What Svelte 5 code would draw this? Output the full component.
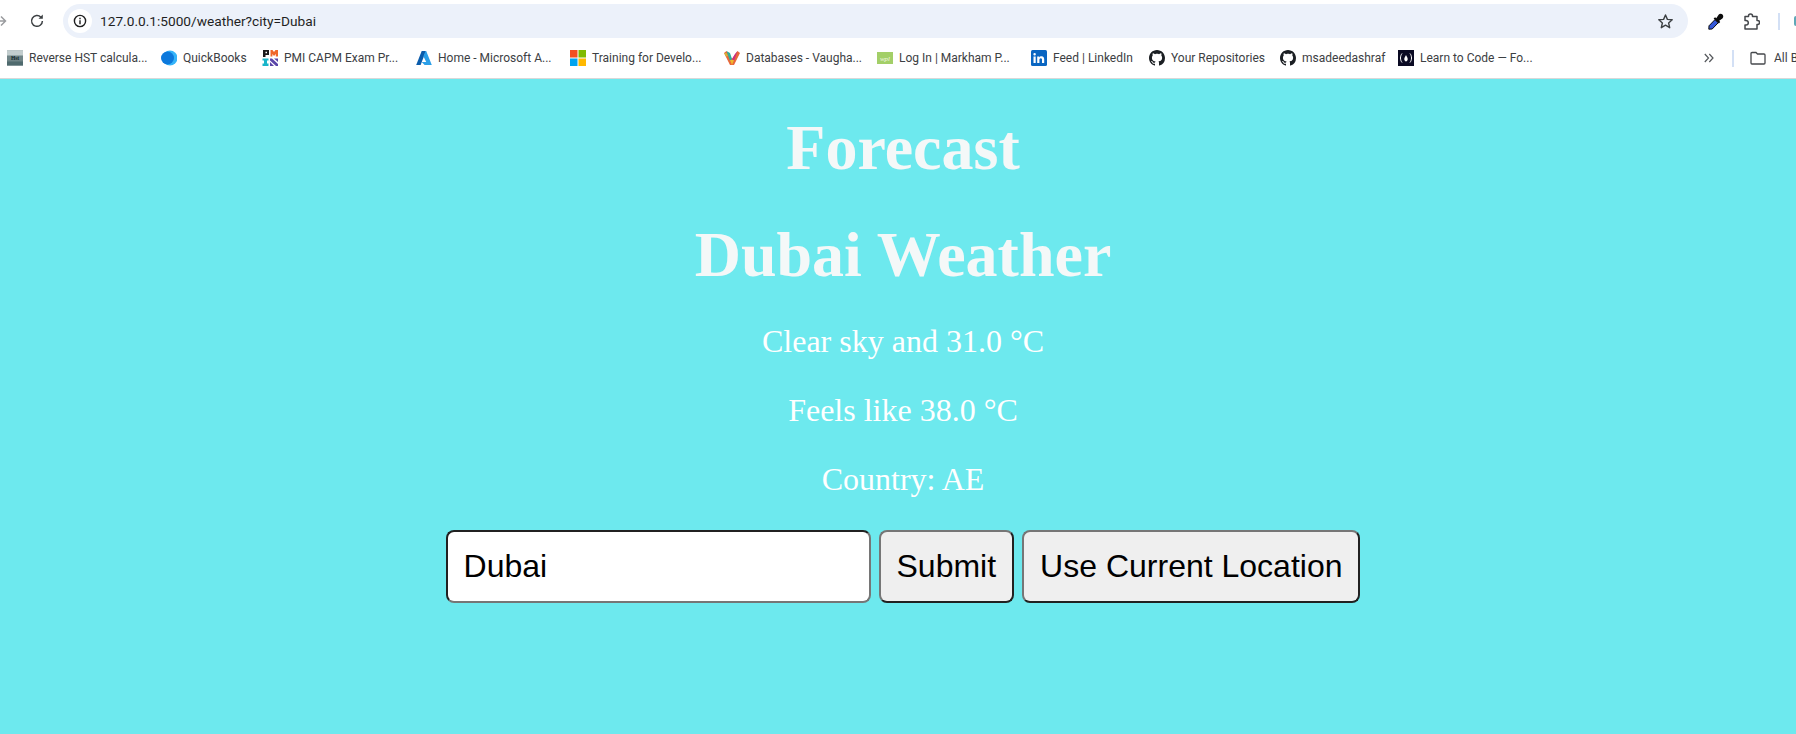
<script>
  const bookmarks = [
    { id: 'hst', label: 'Reverse HST calcula...', w: 154 },
    { id: 'qb', label: 'QuickBooks', w: 101 },
    { id: 'pmi', label: 'PMI CAPM Exam Pr...', w: 154 },
    { id: 'az', label: 'Home - Microsoft A...', w: 154 },
    { id: 'ms', label: 'Training for Develo...', w: 154 },
    { id: 'v', label: 'Databases - Vaugha...', w: 153 },
    { id: 'wpl', label: 'Log In | Markham P...', w: 154 },
    { id: 'in', label: 'Feed | LinkedIn', w: 118 },
    { id: 'gh', label: 'Your Repositories', w: 131 },
    { id: 'gh', label: 'msadeedashraf', w: 118 },
    { id: 'fcc', label: 'Learn to Code — Fo...', w: 136 }
  ];
  const ghPath = 'M8 0C3.58 0 0 3.58 0 8c0 3.54 2.29 6.53 5.47 7.59.4.07.55-.17.55-.38 0-.19-.01-.82-.01-1.49-2.01.37-2.53-.49-2.69-.94-.09-.23-.48-.94-.82-1.13-.28-.15-.68-.52-.01-.53.63-.01 1.08.58 1.23.82.72 1.21 1.87.87 2.33.66.07-.52.28-.87.51-1.07-1.78-.2-3.64-.89-3.64-3.95 0-.87.31-1.59.82-2.15-.08-.2-.36-1.02.08-2.12 0 0 .67-.21 2.2.82.64-.18 1.32-.27 2-.27s1.36.09 2 .27c1.53-1.04 2.2-.82 2.2-.82.44 1.1.16 1.92.08 2.12.51.56.82 1.27.82 2.15 0 3.07-1.87 3.75-3.65 3.95.29.25.54.73.54 1.48 0 1.07-.01 1.93-.01 2.2 0 .21.15.46.55.38A8.01 8.01 0 0 0 16 8c0-4.42-3.58-8-8-8z';
</script>

<div class="page">
  <header class="chrome">
    <div class="toolbar">
      <svg class="back" width="12" height="16" viewBox="0 0 12 16"><path d="M0 8h8M4 3.500 8.500 8 4 12.500" fill="none" stroke="#9a9c9f" stroke-width="1.500"/></svg>
      <svg class="reload" width="16" height="16" viewBox="0 0 16 16"><path d="M13.400 8a5.400 5.400 0 1 1-1.500-3.800" fill="none" stroke="#3c4043" stroke-width="1.500"/><path d="M13.800 1.500v4.300H9.500z" fill="#3c4043"/></svg>
      <div class="omnibox">
        <span class="info">
          <svg width="14" height="14" viewBox="0 0 14 14"><circle cx="7" cy="7" r="5.600" fill="none" stroke="#1f1f1f" stroke-width="1.400"/><path d="M7 6.200v4M7 3.800v1.400" stroke="#1f1f1f" stroke-width="1.400"/></svg>
        </span>
        <span class="url">127.0.0.1:5000/weather?city=Dubai</span>
        <svg class="star" width="17" height="17" viewBox="0 0 17 17"><path d="m8.500 2 1.900 4.400 4.800.4-3.600 3.200 1.100 4.700-4.200-2.500-4.200 2.500 1.100-4.700-3.600-3.200 4.800-.4z" fill="none" stroke="#3c4043" stroke-width="1.400" stroke-linejoin="round"/></svg>
      </div>
      <div class="actions">
        <svg class="dropper" width="16" height="17" viewBox="0 0 16 17"><path d="M.8 16.200 1 12.800 7 6.600l3.200 3.200-6 6.200z" fill="#3558d8" stroke="#0c0c0c" stroke-width="1" stroke-linejoin="round"/><path d="m5.600 5.600 1.500-1.300 1.200 1 2.300-3.600c1-1.300 2.900-1.300 3.900-.2s1.100 2.900-.1 3.900L11.200 7.800l1 1.200-1.400 1.500z" fill="#0c0c0c"/></svg>
        <svg class="puzzle" width="16" height="17" viewBox="0 0 16 17"><path d="M1 3.500h3.500V3a2 2 0 0 1 4 0v.5H13V7.500h.5a2 2 0 0 1 0 4H13V16H1v-4h1a2.300 2.300 0 0 0 0-4.600H1z" fill="none" stroke="#45484c" stroke-width="1.500" stroke-linejoin="round"/></svg>
        <span class="vsep up"></span>
        <span class="peek"></span>
      </div>
    </div>
    <nav class="bookmarks">
      <div class="marks">
        {#each bookmarks as b}
          <div class="mark" style="width:{b.w}px">
            <svg class="fav" width="16" height="16" viewBox="0 0 16 16">
              {#if b.id === 'hst'}
                <rect y="0.500" width="16" height="15" fill="#6f8487"/><rect y="0.500" width="16" height="5" fill="#c2cdce"/><rect y="11.500" width="16" height="4" fill="#4f6a6e"/><text x="8" y="10" font-size="5.500" font-weight="700" text-anchor="middle" fill="#0e2226" font-family="Liberation Serif">Hst</text>
              {:else if b.id === 'qb'}
                <circle cx="9" cy="8" r="7.500" fill="#35b4f9"/><circle cx="6.500" cy="8" r="6.500" fill="#0c79dc"/>
              {:else if b.id === 'pmi'}
                <path d="M1 0h6v5H3.500v2H1zM3.500 1.800v1.400H5V1.800z" fill="#1a1a1a" fill-rule="evenodd"/><path d="M8.500 0h2l1.500 2 1.500-2H16v6.500h-2.200V4L12 6 10.400 4v2.500H8.500z" fill="#f0672a"/><path d="M.5 8.500h6v2H5v3h1.500v2.500h-6v-2.500H2v-3H.5z" fill="#19b5c9"/><path d="M8 8.500h2l6 5.500v2h-2l-6-5.500zM8 12l4 4H8zM12 8.500h4v3.500z" fill="#5a46a8"/>
              {:else if b.id === 'az'}
                <path d="M5.700 1H10L4.600 15H.2z" fill="#0b5cab"/><path d="M9.600 1h.6l5.600 14H8.600l-2.900-3h4.500L7.400 6.300z" fill="#2b9fe8"/>
              {:else if b.id === 'ms'}
                <rect width="7.500" height="7.500" fill="#f25022"/><rect x="8.500" width="7.500" height="7.500" fill="#7fba00"/><rect y="8.500" width="7.500" height="7.500" fill="#00a4ef"/><rect x="8.500" y="8.500" width="7.500" height="7.500" fill="#ffb900"/>
              {:else if b.id === 'v'}
                <path d="M0 3 2.500 1 8 9l5.500-8L16 3l-6 12H6z" fill="#e9683a"/><path d="M2.500 1 6 3l2 6-2 2z" fill="#2fae9c"/><path d="M13.500 1 11 4 8 9l2 2z" fill="#c9317f"/><path d="M6 10h4l-2 5z" fill="#efb92c"/><path d="M0 3h2.500l1.500 3-2 .5z" fill="#d8b33a"/>
              {:else if b.id === 'wpl'}
                <rect y="2" width="16" height="12" fill="#a3cf68"/><text x="8" y="10.500" font-size="7" font-style="italic" text-anchor="middle" fill="#f1f8e4" font-family="Liberation Serif">wpl</text>
              {:else if b.id === 'in'}
                <rect width="16" height="16" rx="1.500" fill="#0a66c2"/><path d="M2.500 6.500h2.200V13H2.500zM3.600 3a1.200 1.200 0 1 1 0 2.500 1.200 1.200 0 0 1 0-2.500zM6.200 6.500h2.100v.9c.4-.6 1.100-1.100 2.200-1.100 2.100 0 2.700 1.300 2.700 3.200V13H11V9.900c0-.9-.2-1.700-1.200-1.700s-1.400.8-1.400 1.700V13H6.200z" fill="#fff"/>
              {:else if b.id === 'gh'}
                <path d={ghPath} fill="#1b1f23"/>
              {:else}
                <rect width="16" height="16" fill="#0a0a23"/><path d="M4 3.500C2 6 2 10 4 12.500M12 3.500c2 2.500 2 6.500 0 9" fill="none" stroke="#fff" stroke-width="1"/><path d="M8 5c.4 1.500 2 2.500 1.700 4.500-.2 1-.9 1.600-1.700 2-.8-.4-1.500-1-1.700-2C6 7.500 7.600 6.500 8 5z" fill="#fff"/>
              {/if}
            </svg>
            <span>{b.label}</span>
          </div>
        {/each}
      </div>
      <div class="more">
        <svg class="chev" width="10" height="10" viewBox="0 0 10 10"><path d="M.8 1 4.500 5 .8 9M5.300 1 9 5 5.300 9" fill="none" stroke="#55585c" stroke-width="1.200"/></svg>
        <span class="vsep"></span>
        <svg class="folder" width="16" height="14" viewBox="0 0 16 14"><path d="M1 2.500a1 1 0 0 1 1-1h4l1.500 1.500H14a1 1 0 0 1 1 1V12a1 1 0 0 1-1 1H2a1 1 0 0 1-1-1z" fill="none" stroke="#45484c" stroke-width="1.300"/></svg>
        <span>All Bookmarks</span>
      </div>
    </nav>
  </header>

  <main class="content">
    <h1>Forecast</h1>
    <h1 class="city">Dubai Weather</h1>
    <p>Clear sky and 31.0 °C</p>
    <p>Feels like 38.0 °C</p>
    <p>Country: AE</p>
    <form class="search" onsubmit={(e) => e.preventDefault()}>
      <input type="text" value="Dubai" />
      <button type="submit">Submit</button>
      <button type="button">Use Current Location</button>
    </form>
  </main>
</div>

<style>
  :global(body) {
    margin: 0;
    background: #6de9ee;
    overflow: hidden;
  }
  .page {
    width: 1796px;
    height: 734px;
    overflow: hidden;
    display: flex;
    flex-direction: column;
    font-family: "Liberation Serif", serif;
  }
  .chrome {
    background: #fff;
    border-bottom: 1px solid #d8d8d8;
    height: 78px;
    flex: none;
    font-family: Roboto, "Noto Sans", sans-serif;
    color: #3c4043;
  }
  .toolbar {
    height: 38px;
    padding-top: 4px;
    box-sizing: border-box;
    display: flex;
    align-items: center;
  }
  .back { margin-left: -3px; flex: none; }
  .reload { margin-left: 20px; margin-right: 18px; flex: none; }
  .omnibox {
    width: 1625px;
    height: 34px;
    flex: none;
    background: #ecf1fa;
    border-radius: 17px;
    display: flex;
    align-items: center;
    box-sizing: border-box;
    padding-left: 5px;
    padding-right: 14px;
  }
  .info {
    width: 24px;
    height: 24px;
    border-radius: 50%;
    background: #fff;
    display: flex;
    align-items: center;
    justify-content: center;
    flex: none;
  }
  .url {
    margin-left: 8px;
    font-size: 13.7px;
    color: #1f1f1f;
    flex: 1;
  }
  .star { flex: none; }
  .actions {
    display: flex;
    align-items: center;
    margin-left: 20px;
  }
  .puzzle { margin-left: 20px; }
  .vsep {
    display: block;
    width: 2px;
    height: 17px;
    background: #d3e0f5;
    flex: none;
  }
  .vsep.up { margin-left: 18px; }
  .peek {
    width: 2px;
    height: 10px;
    background: #5fa8b8;
    margin-left: 14px;
    border-radius: 2px 0 0 2px;
  }
  .bookmarks {
    height: 40px;
    display: flex;
    align-items: center;
    font-size: 12px;
    color: #3c4043;
    padding-left: 7px;
    position: relative;
  }
  .marks {
    display: flex;
  }
  .mark {
    display: flex;
    align-items: center;
    gap: 6px;
    white-space: nowrap;
    flex: none;
  }
  .fav { flex: none; }
  .more {
    position: absolute;
    left: 1704px;
    top: 0;
    height: 40px;
    display: flex;
    align-items: center;
    white-space: nowrap;
  }
  .chev { margin-right: 18px; flex: none; }
  .folder { margin-left: 16px; margin-right: 8px; flex: none; }
  .content {
    flex: 1;
    padding-left: 10px;
    text-align: center;
    color: #fff;
  }
  h1 {
    font-size: 64px;
    margin: 0;
    padding-top: 32px;
    color: #f4f8f8;
    line-height: 1.15;
  }
  .city { padding-top: 33px; }
  p {
    font-size: 32px;
    margin: 32px 0;
    line-height: 37px;
  }
  .search {
    display: flex;
    justify-content: center;
    gap: 8px;
  }
  input, button {
    font-family: "Liberation Sans", sans-serif;
    font-size: 32px;
    height: 73px;
    box-sizing: border-box;
    border-radius: 8px;
    color: #000;
    padding: 16px;
  }
  input {
    width: 425px;
    background: #fff;
    border: 2px inset #767676;
  }
  button {
    background: #efefef;
    border: 2px outset #767676;
  }
</style>
